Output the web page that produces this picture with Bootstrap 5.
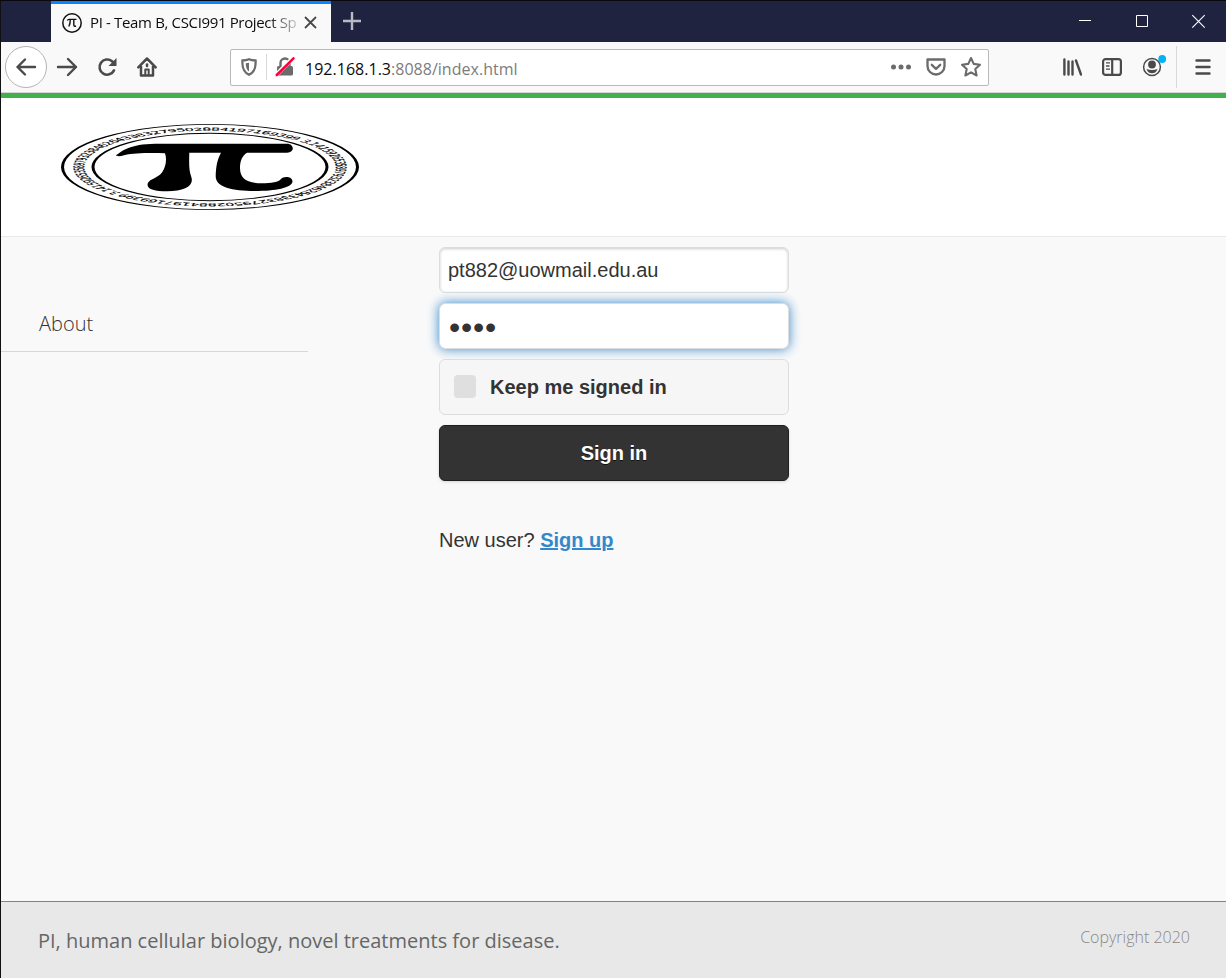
<!DOCTYPE html>
<html lang="en">
<head>
<meta charset="utf-8">
<meta name="viewport" content="width=device-width, initial-scale=1">
<title>PI - Team B, CSCI991 Project</title>
<link href="https://cdn.jsdelivr.net/npm/bootstrap@5.3.0/dist/css/bootstrap.min.css" rel="stylesheet">
<style>
body{background:#f9f9f9;color:#333;border-left:1px solid #111;border-top:1px solid #08080e;height:978px;font-family:"Liberation Sans",Arial,sans-serif;font-size:20px;line-height:26px;overflow:hidden}
svg{display:block;flex:none}
.titlebar{height:41px;background:#202340;padding-left:50px}
.tab-item{width:280px;border-top:3px solid #0a84ff;background:#f9f9fa;padding:0 13px 0 10px}
.tab-label{font:15px/36px "Open Sans",sans-serif;color:#0c0c0d;width:208px;margin:0 6px 2px 7px;letter-spacing:-.35px;white-space:nowrap;-webkit-mask-image:linear-gradient(90deg,#000 178px,transparent 214px)}
.new-tab{margin:11px 0 0 12px}
.win-buttons{gap:44px;margin:14px 20px 0 0}
.toolbar{height:51px;background:#f9f9fa;border-bottom:1px solid #d4d4d6;padding-left:4px}
.back-btn{width:42px;height:42px;border:1px solid #b4b4b5;border-radius:50%;background:#fff}
.urlbar{width:759px;height:37px;margin-left:73px;border:1px solid #b9b9bb;border-radius:2px;background:#fff;padding:0 6px 0 10px}
.url-text{font:16px/33px "Open Sans",sans-serif;color:#7c7c7d;letter-spacing:.02px;padding-top:5px;margin-left:10px}
.url-text b{font-weight:400;color:#0c0c0d}
.vline{width:1px;background:#d9d9da}
.page-head{height:144px;border-top:5px solid #3fb14a;border-bottom:1px solid #e9e9e9;padding:25px 0 0 59px}
.side{width:307px}
.side a{display:block;height:115px;padding:71px 0 0 38px;border-bottom:1px solid #d8d8d8;font:300 20px/32px "Open Sans",sans-serif;color:#333;text-decoration:none}
.login{width:350px;margin:10px 0 0 131px;gap:10px}
.login .form-control{height:46px;border:1px solid #ddd;border-radius:6px;padding:0 8px;font-size:20px;color:#333;box-shadow:inset 0 1px 3px rgba(0,0,0,.2)}
.login .pass{box-shadow:0 0 12px #38c;font-size:32px;letter-spacing:.8px;padding:2px 8px 0 9px}
.keep{height:56px;border:1px solid #ddd;border-radius:6px;background:#f6f6f6;padding:0 14px;font-weight:700;gap:14px}
.keep .form-check-input{width:22px;height:23px;margin:0 0 1px;border:0;border-radius:4px;background:#dfdfdf}
.login .btn{height:56px;border:1px solid #1f1f1f;border-radius:6px;background:#333;color:#fff;font-weight:700;font-size:20px;text-shadow:0 1px 0 #111;box-shadow:0 1px 3px rgba(0,0,0,.15)}
.signup{margin-top:36px}
.signup a{color:#38c;font-weight:700}
.page-foot{height:77px;background:#e8e8e8;border-top:1px solid #3fb14a;font-family:"Open Sans",sans-serif;color:#666;padding:2px 36px 0 37px}
.copy{font-size:16px;font-weight:300;color:#888}
</style>
</head>
<body class="d-flex flex-column">
<div class="titlebar d-flex flex-shrink-0">
  <div class="tab-item d-flex align-items-center">
    <svg width="22" height="22" viewBox="0 0 22 22" fill="none" stroke="#111"><circle cx="11" cy="11" r="9.2" stroke-width="1.5"/><path d="M6.300 8.600q.5-1.200 1.700-1.200h7.500M9.300 7.500q0 4.500-1.500 7M12.800 7.500v5.300q0 2 2.200 1.200" stroke-width="1.400"/></svg>
    <div class="tab-label">PI - Team B, CSCI991 Project Sp</div>
    <svg width="13" height="13" viewBox="0 0 13 13" stroke="#4a4a4b" stroke-width="1.8" style="margin-bottom:2px"><path d="M1 1l11 11M12 1L1 12"/></svg>
  </div>
  <svg class="new-tab" width="18" height="18" viewBox="0 0 18 18" stroke="#b9bac4" stroke-width="2.4"><path d="M9 0v18M0 9h18"/></svg>
  <div class="win-buttons d-flex ms-auto">
    <svg width="13" height="13" viewBox="0 0 13 13" stroke="#fff"><path d="M0 5.500h12"/></svg>
    <svg width="13" height="13" viewBox="0 0 13 13" stroke="#fff" fill="none"><path d="M.5.5h11v11h-11z"/></svg>
    <svg width="13" height="13" viewBox="0 0 13 13" stroke="#fff" stroke-width="1.1" overflow="visible"><path d="M-.7 .2l12.400 12.400M11.700 .2l-12.400 12.400"/></svg>
  </div>
</div>
<div class="toolbar d-flex align-items-center flex-shrink-0">
  <div class="back-btn d-flex align-items-center justify-content-center"><svg width="22" height="20" viewBox="0 0 22 20" fill="none" stroke="#4a4a4b" stroke-width="2.400" stroke-linecap="round" stroke-linejoin="round"><path d="M20 10H2.500M10 2.500L2.500 10l7.500 7.500"/></svg></div>
  <svg class="ms-2" width="24" height="20" viewBox="0 0 24 20" fill="none" stroke="#4a4a4b" stroke-width="2.400" stroke-linecap="round" stroke-linejoin="round"><path d="M3 10h18M13 2l8 8-8 8"/></svg>
  <svg style="margin-left:18px" width="22" height="20" viewBox="0 0 22 20" fill="none" stroke="#4a4a4b" stroke-width="2.600" stroke-linecap="round"><path d="M17 13.400A7.600 7.600 0 1 1 15 4.200l2 2.100"/><path d="M19.500 1v8h-8z" fill="#4a4a4b" stroke="none"/></svg>
  <svg style="margin-left:18px" width="20" height="20" viewBox="0 0 20 20" fill="none" stroke="#4a4a4b" stroke-width="2.500" stroke-linecap="round" stroke-linejoin="round"><path d="M1.300 10.300L10 1.500l8.700 8.800M4 9v9.600h12V9"/><path d="M8.300 18v-5.500h3.400V18" stroke-width="2"/><path d="M10 7.500v1.500"/></svg>
  <div class="urlbar d-flex align-items-center">
    <svg width="17" height="18" viewBox="0 0 17 18"><path d="M8 1.200C6.300 2 3.500 2.400 1.400 2.500c-.3 7 .8 11.600 6.600 14.200 5.800-2.600 6.900-7.200 6.600-14.200C12.500 2.400 9.700 2 8 1.200z" fill="none" stroke="#6b6b6c" stroke-width="2.300"/><path d="M8 4.800v8.600C5.300 11.800 4.800 9 4.800 5.300z" fill="#6b6b6c"/></svg>
    <div class="vline" style="height:26px;margin:0 8px 0 8px"></div>
    <svg width="20" height="20" viewBox="0 0 20 20"><path d="M5.500 9V6a4.500 4.500 0 0 1 9 0v3" fill="none" stroke="#6b6b6c" stroke-width="2.400"/><rect x="2" y="9" width="16" height="9.500" rx="1.500" fill="#6b6b6c"/><path d="M1 18L18.500.5" stroke="#fff" stroke-width="4.200"/><path d="M1.800 18L18.500 1.300" stroke="#ff0039" stroke-width="2.500" stroke-linecap="round"/></svg>
    <div class="url-text flex-grow-1"><b>192.168.1.3</b>:8088/index.html</div>
    <svg width="22" height="6" viewBox="0 0 22 6" fill="#6b6b6c"><circle cx="3.500" cy="3" r="2.500"/><circle cx="11" cy="3" r="2.500"/><circle cx="18.500" cy="3" r="2.500"/></svg>
    <svg style="margin-left:13px" width="22" height="20" viewBox="0 0 22 20" fill="none" stroke="#6b6b6c" stroke-width="2.300" stroke-linecap="round" stroke-linejoin="round"><path d="M2.500 2.500h17v6.500a8.500 8.500 0 0 1-17 0z"/><path d="M6.800 7.800l4.200 4 4.200-4"/></svg>
    <svg style="margin-left:13px" width="22" height="22" viewBox="0 0 22 22" fill="none" stroke="#6b6b6c" stroke-width="2.100" stroke-linejoin="round"><path d="M11 2l2.700 5.900 6.300.8-4.700 4.300 1.300 6.500L11 16.300l-5.600 3.200L6.700 13 2 8.700l6.300-.8z"/></svg>
  </div>
  <div class="d-flex align-items-center ms-auto h-100">
    <svg width="20" height="18" viewBox="0 0 20 18" stroke="#4a4a4b" stroke-width="2.400" stroke-linecap="round"><path d="M2.400 1.500v15M6.500 3.500v13M10.500 3.500v13M14 2.500l5 14"/></svg>
    <svg style="margin-left:20px" width="20" height="18" viewBox="0 0 20 18" fill="none" stroke="#4a4a4b" stroke-width="2.200"><rect x="1.100" y="1.100" width="17.800" height="15.800" rx="2.500"/><path d="M10.200 1v16"/><path d="M4 4.800h4M4 8h3.500M4 11.200h4" stroke-width="1.300"/></svg>
    <svg style="margin:-6px 0 0 20px" width="26" height="26" viewBox="0 0 26 26"><circle cx="10" cy="16" r="8.400" fill="none" stroke="#4a4a4b" stroke-width="1.500"/><circle cx="10" cy="13.500" r="3.900" fill="#4a4a4b"/><path d="M4.500 18q5.500 2 11 0-1.200 4.200-5.500 4.200T4.500 18z" fill="#4a4a4b"/><circle cx="20.200" cy="8" r="3.900" fill="#00b3f4"/></svg>
    <div class="vline" style="height:42px;margin:0 18px 0 8px"></div>
    <svg style="margin-right:15px" width="16" height="16" viewBox="0 0 16 16" stroke="#4a4a4b" stroke-width="2.400" stroke-linecap="round"><path d="M1.500 1.500h13M1.500 8h13M1.500 14.500h13"/></svg>
  </div>
</div>
<header class="page-head bg-white flex-shrink-0">
  <svg width="300" height="88" viewBox="60 123 300 88">
    <defs><path id="ring" d="M89.100 -89.100A126 126 0 0 1 -89.100 89.100A126 126 0 0 1 89.100 -89.100"/></defs>
    <g transform="translate(210 167) scale(1 .2886)">
      <circle r="147.500" fill="none" stroke="#000" stroke-width="3"/>
      <circle r="117" fill="none" stroke="#000" stroke-width="3"/>
      <text font-family="DejaVu Sans" font-size="14.500" stroke="#000" stroke-width=".3" textLength="786"><textPath href="#ring" textLength="786">3.141592653589793238462643383279502884197169399 3.141592653589793238462643383279502884197169399</textPath></text>
    </g>
    <path d="M116 155.300C122 151 130 144 155 143.700H287C294.500 143.700 295 152.700 287 152.700H247C242 156 240 161 240 168C240 178 246 183.300 262 183.300C271 183.300 279 182 281 179C283 176 292.500 176 292.500 181.500C292 188 275 191 255 191C232 191 215.500 187 215.700 176C216 167 217 160 221 152.700H189.300C189 165 189 170 191 176C195 186 185 191.300 167 191.300C155 191.300 148 189.500 147.500 185C147.500 179 157 179 162 172.500C166 167 167 159 165 153.200C145 153 135 153 124 155.300C120 156.500 117 156.500 116 155.300z"/>
  </svg>
</header>
<main class="d-flex flex-grow-1">
  <nav class="side"><a href="#">About</a></nav>
  <form class="login d-flex flex-column">
    <input class="form-control" type="text" value="pt882@uowmail.edu.au">
    <input class="form-control pass" type="password" value="1234">
    <label class="keep d-flex align-items-center"><input class="form-check-input" type="checkbox"><span>Keep me signed in</span></label>
    <button class="btn" type="button">Sign in</button>
    <div class="signup">New user? <a href="#">Sign up</a></div>
  </form>
</main>
<footer class="page-foot d-flex justify-content-between align-items-center flex-shrink-0">
  <div>PI, human cellular biology, novel treatments for disease.</div>
  <div class="copy pb-2">Copyright 2020</div>
</footer>
<script src="https://cdn.jsdelivr.net/npm/bootstrap@5.3.0/dist/js/bootstrap.bundle.min.js"></script>
</body>
</html>
